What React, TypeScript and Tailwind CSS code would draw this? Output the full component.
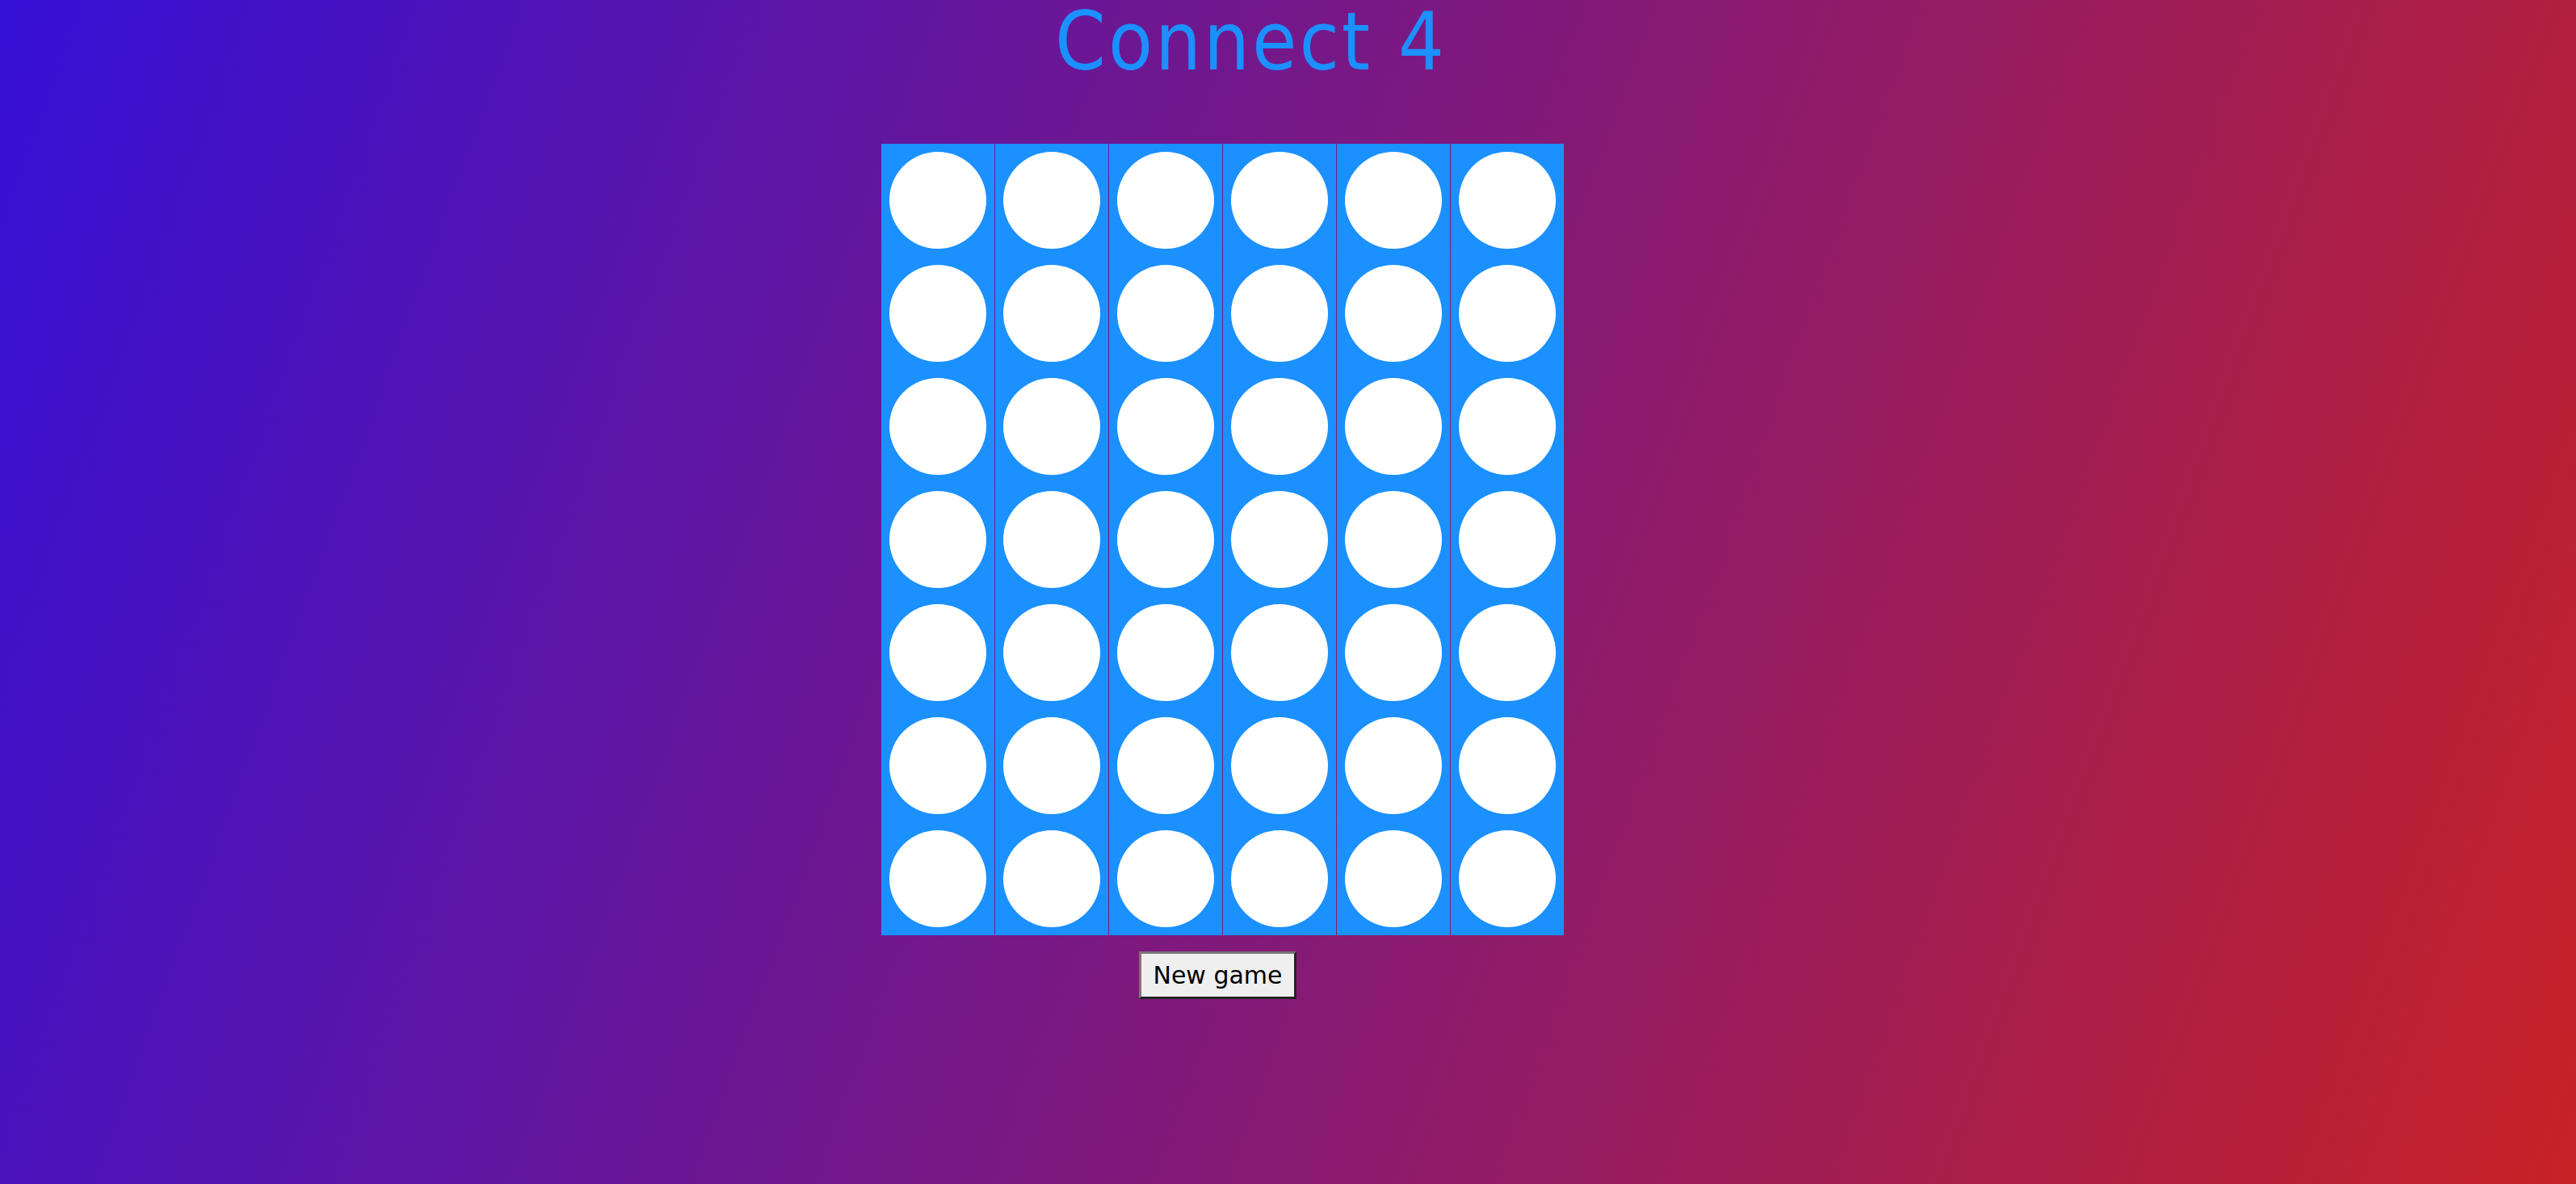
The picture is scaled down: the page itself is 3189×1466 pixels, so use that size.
import React from 'react';

const COLS = 6;
const ROWS = 7;

export default function App() {
  const board = Array.from({ length: COLS }, () => Array.from({ length: ROWS }, () => 0));

  return (
    <div className="min-h-screen w-full bg-[linear-gradient(110deg,#3510d6,#c72226)]">
      <div className="w-[3027px] flex flex-col items-center pt-[2px]">
        <h1 className="ml-[70px] text-[100px] leading-[100px] tracking-[3px] text-[#1b90ff] font-['DejaVu_Sans',sans-serif] [font-stretch:condensed]">
          Connect 4
        </h1>

        {/* Board */}
        <div className="mt-[76px] flex gap-px">
          {board.map((col, c) => (
            <div key={c} className="w-[140px] bg-[#1b90ff] flex flex-col">
              {col.map((cell, r) => (
                <div key={r} className="w-[140px] h-[140px] flex items-center justify-center">
                  <div className="w-[120px] h-[120px] rounded-full bg-white" />
                </div>
              ))}
            </div>
          ))}
        </div>

        <button className="mt-[20px] mr-[12px] h-[59px] px-[14px] bg-[#efefef] border-[3px] border-t-[#777777] border-l-[#777777] border-b-[#232323] border-r-[#232323] text-black text-[30px] leading-none font-['DejaVu_Sans',sans-serif]">
          New game
        </button>
      </div>
    </div>
  );
}
